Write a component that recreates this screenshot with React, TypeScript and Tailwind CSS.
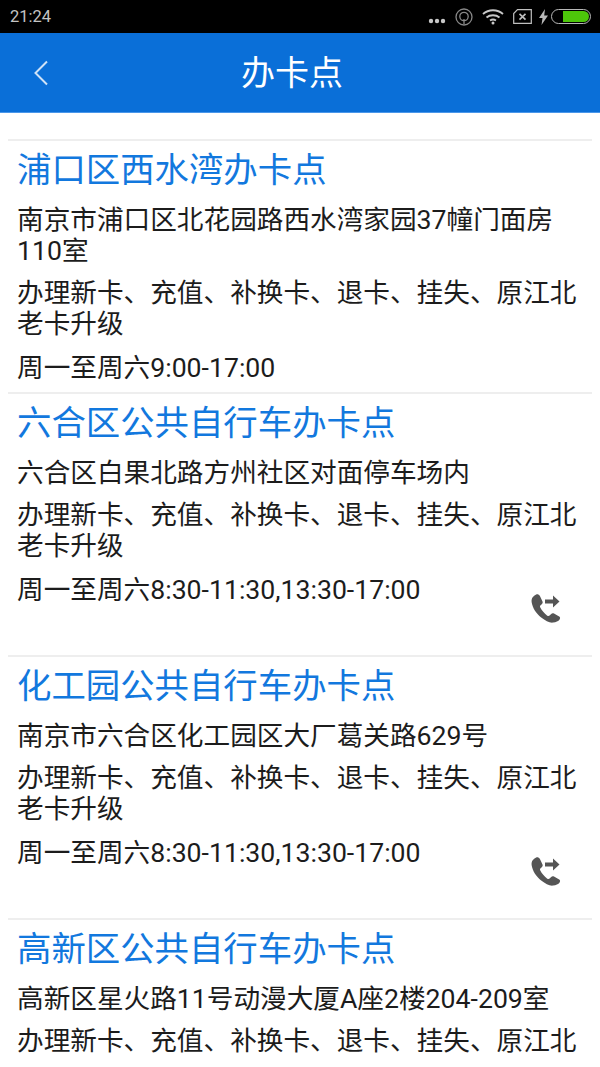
const font = { fontFamily: 'Roboto, "Noto Sans CJK SC", sans-serif' };

function CallIcon() {
  return (
    <svg width="32" height="32" viewBox="0 0 32 32" fill="#555555" aria-hidden="true">
      <path d="M4.5 3.5 C2.5 4.8 1.2 7 1.6 10 C2.6 16.4 6.4 21.6 11.2 25.6 C15.5 29 19.5 31 23 30.6 C26 30.3 28.4 29 29.6 27.4 C30.4 26.3 30.2 25.2 29.2 24.6 L24 21.6 C23 21.1 22 21.2 21.2 22 L19.6 23.6 C18.8 24.2 18 24.1 17 23.4 C14.5 21.7 11.7 18.4 10.3 15.6 C9.8 14.6 9.9 13.9 10.6 13.3 L12 12 C12.8 11.2 12.9 10.3 12.4 9.3 L9.8 3.8 C9.1 2.5 7.5 1.8 6.2 2.4 Z" />
      <path d="M15 7.5 H23 V3.6 L29.5 9.5 L23 15.4 V11.5 H15 Z" />
    </svg>
  );
}

type Item = { title: string; address: string; hours: string; phone?: boolean };

const items: Item[] = [
  { title: "浦口区西水湾办卡点", address: "南京市浦口区北花园路西水湾家园37幢门面房110室", hours: "周一至周六9:00-17:00" },
  { title: "六合区公共自行车办卡点", address: "六合区白果北路方州社区对面停车场内", hours: "周一至周六8:30-11:30,13:30-17:00", phone: true },
  { title: "化工园公共自行车办卡点", address: "南京市六合区化工园区大厂葛关路629号", hours: "周一至周六8:30-11:30,13:30-17:00", phone: true },
  { title: "高新区公共自行车办卡点", address: "高新区星火路11号动漫大厦A座2楼204-209室", hours: "周一至周六8:30-11:30,13:30-17:00", phone: true },
];

function Card({ item }: { item: Item }) {
  return (
    <div className="border-t-2 border-[#eeeeee]">
      <div className="px-[9px] pt-[6px] flex flex-col">
        <h2 className="text-[34.4px] leading-[46px] font-normal text-[#1278de]">{item.title}</h2>
        <p className="mt-[12px] text-[26.65px] leading-[31px] text-[#1c1c1c]">{item.address}</p>
        <p className="mt-[11px] text-[26.65px] leading-[31px] text-[#1c1c1c]">办理新卡、充值、补换卡、退卡、挂失、原江北老卡升级</p>
        <p className="mt-[13px] text-[26.65px] leading-[31px] text-[#1c1c1c]">{item.hours}</p>
        {item.phone ? (
          <div className="h-[63px] -mt-[14px] flex justify-end items-start pr-[21px]">
            <CallIcon />
          </div>
        ) : (
          <div className="h-[8px]" />
        )}
      </div>
    </div>
  );
}

export default function App() {
  return (
    <div style={font} className="w-[600px] h-[1067px] overflow-hidden bg-white flex flex-col">
      <div className="h-[33px] shrink-0 bg-black flex items-center justify-between pl-[10px] pr-[9px]">
        <span className="pt-[1px] text-[16.5px] text-[#c4c4c4]">21:24</span>
        <div className="flex items-center gap-[6px]">
          <svg width="18" height="6" viewBox="0 0 18 6" fill="#c8c8c8" className="mt-[8px] mr-[3px]" aria-hidden="true">
            <circle cx="3" cy="3" r="2.2" />
            <circle cx="9" cy="3" r="2.2" />
            <circle cx="15" cy="3" r="2.2" />
          </svg>
          <svg width="18" height="18" viewBox="0 0 18 18" fill="none" stroke="#888888" strokeWidth="1.3" className="mr-[3px]" aria-hidden="true">
            <circle cx="9" cy="9" r="8" />
            <circle cx="9" cy="8.5" r="4.2" />
            <path d="M9 11 V16" />
          </svg>
          <svg width="22" height="16" viewBox="0 0 22 16" fill="none" stroke="#c8c8c8" strokeWidth="1.8" className="mr-[3px]" aria-hidden="true">
            <path d="M1 5 C6.5 0 15.5 0 21 5" />
            <path d="M4.5 8.5 C8 5.5 14 5.5 17.5 8.5" />
            <path d="M8 11.5 C9.8 10.3 12.2 10.3 14 11.5" />
            <circle cx="11" cy="14" r="1.5" fill="#c8c8c8" stroke="none" />
          </svg>
          <svg width="19" height="15" viewBox="0 0 19 15" fill="none" stroke="#c0c0c0" strokeWidth="1.2" className="mr-[1px]" aria-hidden="true">
            <path d="M4.5 .7 H18.3 V14.3 H.7 V4.5 Z" />
            <path d="M6.5 4.8 L12.5 10.6 M12.5 4.8 L6.5 10.6" strokeWidth="1.6" />
          </svg>
          <svg width="9" height="16" viewBox="0 0 9 16" fill="#b8b8b8" aria-hidden="true">
            <path d="M6 0 L0 9 H3.5 L2.5 16 L9 6.5 H5.2 Z" />
          </svg>
          <div className="w-[40px] h-[15px] rounded-full border border-[#b8b8b8] p-[1px] pl-[11px] -ml-[3px]">
            <div className="h-full rounded-r-full bg-[#4dc60a]" />
          </div>
        </div>
      </div>
      <div className="h-[80px] shrink-0 bg-[#0a6fd8] border-b border-[#4a97ea] flex items-center relative">
        <svg width="16" height="26" viewBox="0 0 16 26" fill="none" stroke="#cfe2f7" strokeWidth="2" className="absolute left-[33px] top-[27px]" aria-hidden="true">
          <path d="M14 1.5 L2.5 13 L14 24.5" />
        </svg>
        <h1 className="w-full pr-[16px] pt-[2px] text-center text-[34px] font-normal text-white">办卡点</h1>
      </div>
      <div className="mt-[26px] mb-[12px] mx-[8px] flex-1 min-h-0 overflow-hidden flex flex-col">
        {items.map((item) => (
          <Card key={item.title} item={item} />
        ))}
      </div>
    </div>
  );
}
